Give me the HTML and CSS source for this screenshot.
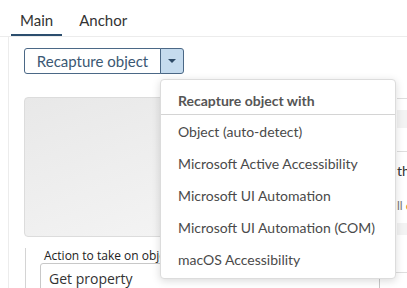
FILE: index.html
```html
<!DOCTYPE html>
<html lang="en">
<head>
  <meta charset="UTF-8" />
  <title>Recapture object</title>
  <link rel="stylesheet" href="styles.css">
</head>
<body>
  <div class="tabs">
    <span class="tab active">Main</span>
    <span class="tab">Anchor</span>
  </div>
  <div class="panel">
    <div class="split">
      <button class="btn-main">Recapture object</button>
      <button class="btn-drop">
        <svg width="10" height="6" viewBox="0 0 10 6"><path d="M1 1h8L5 5z" fill="#2e4a66"/></svg>
      </button>
    </div>
    <div class="row">
      <div class="preview"></div>
      <div class="side">
        <div class="side-line"></div>
        <div class="side-band"></div>
        <div class="side-line gap"></div>
        <div class="side-text">th</div>
        <div class="side-text small">ll <span class="link">o</span></div>
        <div class="side-band thin"></div>
      </div>
    </div>
    <div class="action">
      <div class="field">
        <label>Action to take on object</label>
        <div class="select">Get property</div>
      </div>
      <div class="side-end"></div>
    </div>
  </div>

  <div class="menu">
    <div class="menu-head">Recapture object with</div>
    <div class="menu-item">Object (auto-detect)</div>
    <div class="menu-item">Microsoft Active Accessibility</div>
    <div class="menu-item">Microsoft UI Automation</div>
    <div class="menu-item">Microsoft UI Automation (COM)</div>
    <div class="menu-item">macOS Accessibility</div>
  </div>
</body>
</html>
```

FILE: styles.css
```css
* { box-sizing: border-box; }
body {
  margin: 0;
  width: 407px;
  height: 288px;
  overflow: hidden;
  background: #fff;
  font-family: Lato, "Open Sans", sans-serif;
  color: #333;
  position: relative;
}
.tabs {
  display: flex;
  gap: 8px;
  padding-left: 11px;
  height: 37px;
  border-bottom: 1px solid #ececec;
}
.tab {
  padding: 10px 9px 0;
  font-size: 15px;
  line-height: 20px;
  color: #333;
}
.tab.active {
  border-bottom: 2px solid #2c4e6e;
}
.panel {
  margin-left: 8px;
  border-left: 1px solid #ececec;
  padding: 11px 0 0 15px;
}
.split {
  display: flex;
  height: 26px;
}
.split button {
  margin: 0;
  font-family: inherit;
  border: 1px solid #4b6886;
}
.btn-main {
  width: 137px;
  background: #fff;
  color: #3b5873;
  font-size: 15px;
  border-radius: 3px 0 0 3px;
  padding: 0;
}
.btn-drop {
  width: 24px;
  margin-left: -1px !important;
  background: #c5dbee;
  border-radius: 0 3px 3px 0;
  display: flex;
  align-items: center;
  justify-content: center;
  padding: 0;
}
.row {
  display: flex;
  margin-top: 23px;
  height: 140px;
}
.preview {
  flex: none;
  width: 364px;
  height: 140px;
  border: 1px solid #dcdcdc;
  border-radius: 4px;
  background: linear-gradient(160deg, #e8e8e8, #f8f8f8);
}
.side {
  flex: none;
  margin-left: 9px;
  width: 40px;
}
.side-line {
  margin-top: 1px;
  border-top: 1px solid #dedede;
}
.side-line.gap {
  margin-top: 23px;
}
.side-band {
  margin-top: 11px;
  height: 18px;
  background: #f3f3f3;
}
.side-band.thin {
  margin-top: 8px;
  height: 12px;
}
.side-text {
  margin-top: 10px;
  font-size: 14px;
  line-height: 18px;
  color: #333;
  white-space: nowrap;
}
.side-text.small {
  margin-top: 17px;
  font-size: 12px;
  color: #777;
}
.link {
  color: #d08a2c;
}
.action {
  display: flex;
  margin-top: 11px;
  margin-left: 1px;
}
.field {
  flex: none;
  width: 355px;
  border-left: 1px solid #d4d4d4;
  padding-left: 14px;
}
.field label {
  display: block;
  padding-left: 4px;
  font-family: "Open Sans", sans-serif;
  font-size: 12px;
  line-height: 15px;
  color: #222;
}
.select {
  height: 32px;
  border: 1px solid #c8c8c8;
  border-radius: 3px;
  padding: 5px 8px;
  font-family: "Open Sans", sans-serif;
  font-size: 14px;
  line-height: 20px;
  color: #333;
}
.side-end {
  flex: none;
  margin-left: 16px;
  width: 40px;
  margin-top: 24px;
  border-top: 1px solid #dedede;
  height: 1px;
}
.menu {
  position: absolute;
  left: 160px;
  top: 79px;
  width: 236px;
  height: 200px;
  background: #fff;
  border: 1px solid #dcdcdc;
  border-radius: 4px;
  box-shadow: 0 2px 8px rgba(0, 0, 0, 0.15);
  padding-top: 9px;
}
.menu-head {
  padding: 0 17px;
  height: 26px;
  font-size: 14px;
  font-weight: bold;
  color: #555;
  line-height: 24px;
  border-bottom: 1px solid #d4d4d4;
}
.menu-item {
  padding: 0 17px;
  height: 32px;
  line-height: 32px;
  font-size: 14px;
  color: #4a4a4a;
  white-space: nowrap;
}
.menu-head + .menu-item {
  margin-top: 1px;
}
```
